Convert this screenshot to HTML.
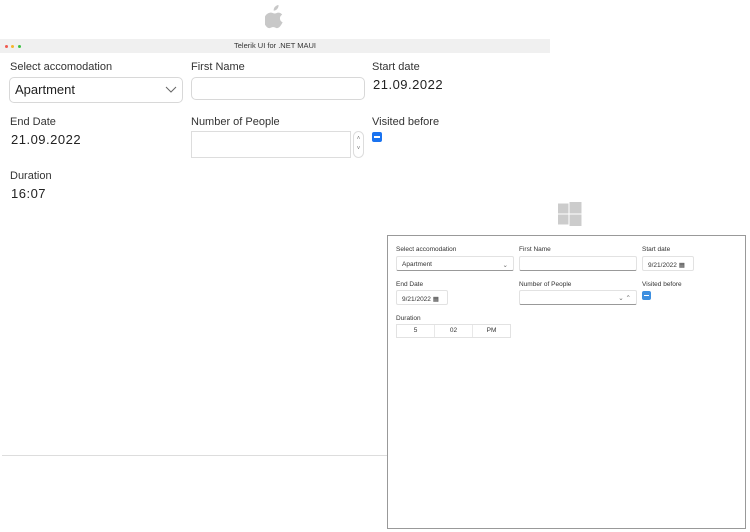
<!DOCTYPE html>
<html><head><meta charset="utf-8"><style>
*{margin:0;padding:0;box-sizing:border-box}
body{width:750px;height:532px;background:#fff;position:relative;overflow:hidden;font-family:"Liberation Sans",sans-serif;color:#222}
.a{position:absolute}
.ml{font-size:11px;color:#333}
.mv{font-size:13px;color:#222;letter-spacing:.5px}
.mb{border:1px solid #d8d8d8;border-radius:5px;background:#fff}
.wl{font-size:6.5px;color:#333}
.wb{border:1px solid #e2e2e2;border-bottom:1px solid #999;border-radius:2px;background:#fff;font-size:6.5px;color:#333}
</style></head><body>
<!-- apple logo -->
<svg class="a" style="left:265px;top:5px" width="20" height="24" viewBox="0 0 20 24"><path fill="#c8c8c8" d="M13.5 0c.2 1.6-.4 3-1.3 4-.9 1-2.2 1.7-3.5 1.6-.2-1.5.5-3 1.3-3.9C11 .8 12.4.1 13.5 0zM17.6 17.3c-.5 1.2-.8 1.7-1.5 2.7-1 1.4-2.3 3.1-4 3.1-1.5 0-1.9-1-3.9-1-2 0-2.5 1-4 1-1.7 0-2.9-1.6-3.9-3C-2 16.4-.9 10.6 2.6 8.6c1.1-.7 2.3-1 3.5-1 1.5 0 2.4.9 3.7.9 1.2 0 2-.9 3.7-.9 1.3 0 2.7.7 3.7 2-3.3 1.8-2.8 6.5.4 7.7z"/></svg>
<!-- mac titlebar -->
<div class="a" style="left:0;top:39px;width:550px;height:14px;background:#f0f0f0"></div>
<div class="a" style="left:5px;top:45px;width:3px;height:3px;border-radius:50%;background:#f05a50"></div>
<div class="a" style="left:11px;top:45px;width:3px;height:3px;border-radius:50%;background:#f5b52a"></div>
<div class="a" style="left:18px;top:45px;width:3px;height:3px;border-radius:50%;background:#3cc244"></div>
<div class="a" style="left:0;top:41px;width:550px;text-align:center;font-size:7.5px;color:#333">Telerik UI for .NET MAUI</div>
<!-- mac content -->
<div class="a ml" style="left:10px;top:61px">Select accomodation</div>
<div class="a mb" style="left:9px;top:77px;width:174px;height:26px"></div>
<div class="a" style="left:15px;top:82px;font-size:13px">Apartment</div>
<svg class="a" style="left:165px;top:86px" width="12" height="8"><path d="M1 1l5 5 5-5" fill="none" stroke="#666" stroke-width="1"/></svg>
<div class="a ml" style="left:191px;top:61px">First Name</div>
<div class="a mb" style="left:191px;top:77px;width:174px;height:23px"></div>
<div class="a ml" style="left:372px;top:61px">Start date</div>
<div class="a mv" style="left:373px;top:77px">21.09.2022</div>
<div class="a ml" style="left:10px;top:116px">End Date</div>
<div class="a mv" style="left:11px;top:132px">21.09.2022</div>
<div class="a ml" style="left:191px;top:116px">Number of People</div>
<div class="a" style="left:191px;top:131px;width:160px;height:27px;border:1px solid #ddd;background:#fff"></div>
<div class="a" style="left:353px;top:131px;width:11px;height:27px;border:1px solid #ddd;border-radius:6px;font-size:6px;color:#777;text-align:center;line-height:10px;padding-top:2px">˄<br>˅</div>
<div class="a ml" style="left:372px;top:116px">Visited before</div>
<div class="a" style="left:372px;top:132px;width:10px;height:10px;border-radius:2px;background:#1a73f0"></div>
<div class="a" style="left:374px;top:136px;width:6px;height:1.5px;background:#fff"></div>
<div class="a ml" style="left:10px;top:170px">Duration</div>
<div class="a mv" style="left:11px;top:186px">16:07</div>
<div class="a" style="left:2px;top:455px;width:385px;height:1px;background:#ddd"></div>
<!-- windows logo -->
<svg class="a" style="left:558px;top:202px" width="24" height="24" viewBox="0 0 24 24"><g fill="#ccc"><rect x="0" y="1.5" width="10.5" height="10"/><rect x="11.5" y="0" width="12" height="11.5"/><rect x="0" y="12.5" width="10.5" height="10"/><rect x="11.5" y="12.5" width="12" height="11.5"/></g></svg>
<!-- windows window -->
<div class="a" style="left:387px;top:235px;width:359px;height:294px;border:1px solid #999;background:#fff"></div>
<div class="a wl" style="left:396px;top:246px">Select accomodation</div>
<div class="a wb" style="left:396px;top:256px;width:118px;height:15px;padding:4px 5px">Apartment<span style="float:right;color:#666">⌄</span></div>
<div class="a wl" style="left:519px;top:246px">First Name</div>
<div class="a wb" style="left:519px;top:256px;width:118px;height:15px"></div>
<div class="a wl" style="left:642px;top:246px">Start date</div>
<div class="a wb" style="left:642px;top:256px;width:52px;height:15px;padding:4px 5px;border-bottom-color:#e2e2e2">9/21/2022 ▦</div>
<div class="a wl" style="left:396px;top:281px">End Date</div>
<div class="a wb" style="left:396px;top:290px;width:52px;height:15px;padding:4px 5px;border-bottom-color:#e2e2e2">9/21/2022 ▦</div>
<div class="a wl" style="left:519px;top:281px">Number of People</div>
<div class="a wb" style="left:519px;top:290px;width:118px;height:15px;padding:3px 5px;text-align:right;color:#666">⌄ ⌃</div>
<div class="a wl" style="left:642px;top:281px">Visited before</div>
<div class="a" style="left:642px;top:291px;width:9px;height:9px;border-radius:2px;background:#3d8fe0"></div>
<div class="a" style="left:644px;top:295px;width:5px;height:1px;background:#fff"></div>
<div class="a wl" style="left:396px;top:315px">Duration</div>
<div class="a" style="left:396px;top:324px;width:115px;height:14px;border:1px solid #e2e2e2;display:flex;font-size:6.5px;color:#333">
<div style="flex:1;text-align:center;line-height:12px;border-right:1px solid #e8e8e8">5</div>
<div style="flex:1;text-align:center;line-height:12px;border-right:1px solid #e8e8e8">02</div>
<div style="flex:1;text-align:center;line-height:12px">PM</div></div>
</body></html>
